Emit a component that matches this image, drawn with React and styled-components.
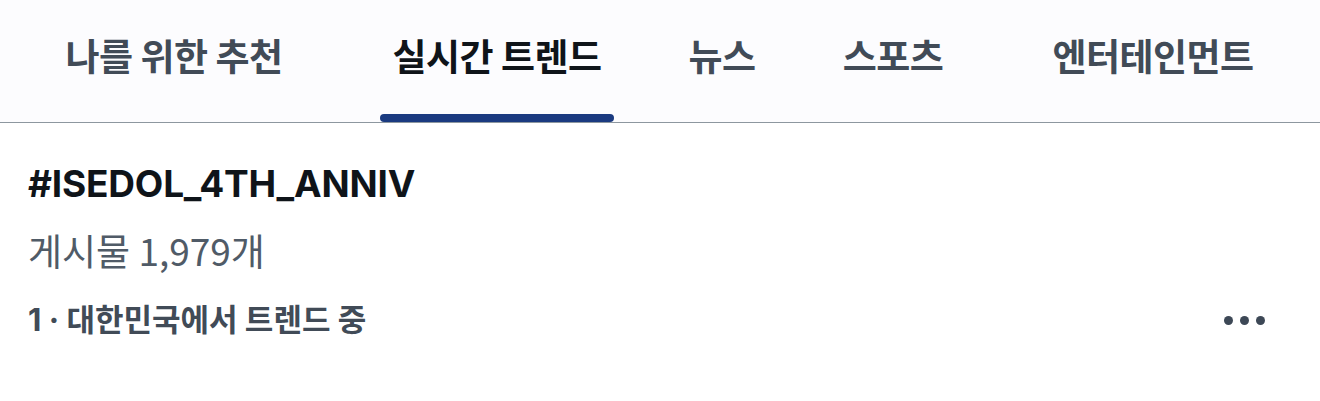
import React from 'react';
import styled, { createGlobalStyle } from 'styled-components';

const GlobalStyle = createGlobalStyle`
  html, body {
    margin: 0;
    padding: 0;
    background: #ffffff;
  }
  body {
    font-family: Inter, "Noto Sans CJK KR", sans-serif;
  }
`;

const Page = styled.div`
  width: 1320px;
  height: 401px;
  background: #ffffff;
  overflow: hidden;
`;

const TabBar = styled.nav`
  display: flex;
  height: 123px;
  background: #fcfcfe;
  border-bottom: 1px solid #8d979f;
  box-sizing: border-box;
`;

const Tab = styled.div`
  position: relative;
  width: ${(p) => p.$width}px;
  display: flex;
  justify-content: center;
  align-items: center;
  padding-bottom: 12px;
  font-family: "Noto Sans CJK KR", sans-serif;
  font-size: 37px;
  font-weight: 700;
  letter-spacing: -0.5px;
  color: ${(p) => (p.$active ? '#0f1419' : '#414b57')};
`;

const Indicator = styled.span`
  position: absolute;
  bottom: 0;
  left: 50%;
  transform: translateX(-50%);
  width: 234px;
  height: 8px;
  border-radius: 4px;
  background: #1a3a80;
`;

const Trend = styled.section`
  padding: 38px 28px 0 28px;
  display: flex;
  flex-direction: column;
`;

const Tag = styled.div`
  font-family: Inter, "Noto Sans CJK KR", sans-serif;
  font-size: 37px;
  font-weight: 700;
  color: #0f1419;
  line-height: 46px;
  letter-spacing: -0.2px;
`;

const Count = styled.div`
  margin-top: 20px;
  font-family: "Noto Sans CJK KR", sans-serif;
  font-size: 37px;
  font-weight: 400;
  color: #505b67;
  line-height: 46px;
`;

const MetaRow = styled.div`
  margin-top: 28px;
  display: flex;
  align-items: center;
  justify-content: space-between;
`;

const Meta = styled.div`
  font-family: Inter, "Noto Sans CJK KR", sans-serif;
  font-size: 31px;
  font-weight: 700;
  color: #414b57;
  line-height: 38px;
`;

const More = styled.button`
  display: flex;
  gap: 7px;
  padding: 0;
  margin-right: 27px;
  border: none;
  background: transparent;
`;

const Dot = styled.span`
  width: 9px;
  height: 9px;
  border-radius: 50%;
  background: #3d4856;
`;

const tabs = [
  { label: '나를 위한 추천', width: 348 },
  { label: '실시간 트렌드', width: 298, active: true },
  { label: '뉴스', width: 152 },
  { label: '스포츠', width: 190 },
  { label: '엔터테인먼트', width: 330 },
];

export default function App() {
  return (
    <Page>
      <GlobalStyle />
      <TabBar>
        {tabs.map((t) => (
          <Tab key={t.label} $width={t.width} $active={t.active}>
            {t.label}
            {t.active && <Indicator />}
          </Tab>
        ))}
      </TabBar>
      <Trend>
        <Tag>#ISEDOL_4TH_ANNIV</Tag>
        <Count>게시물 1,979개</Count>
        <MetaRow>
          <Meta>1 · 대한민국에서 트렌드 중</Meta>
          <More aria-label="더 보기">
            <Dot />
            <Dot />
            <Dot />
          </More>
        </MetaRow>
      </Trend>
    </Page>
  );
}
